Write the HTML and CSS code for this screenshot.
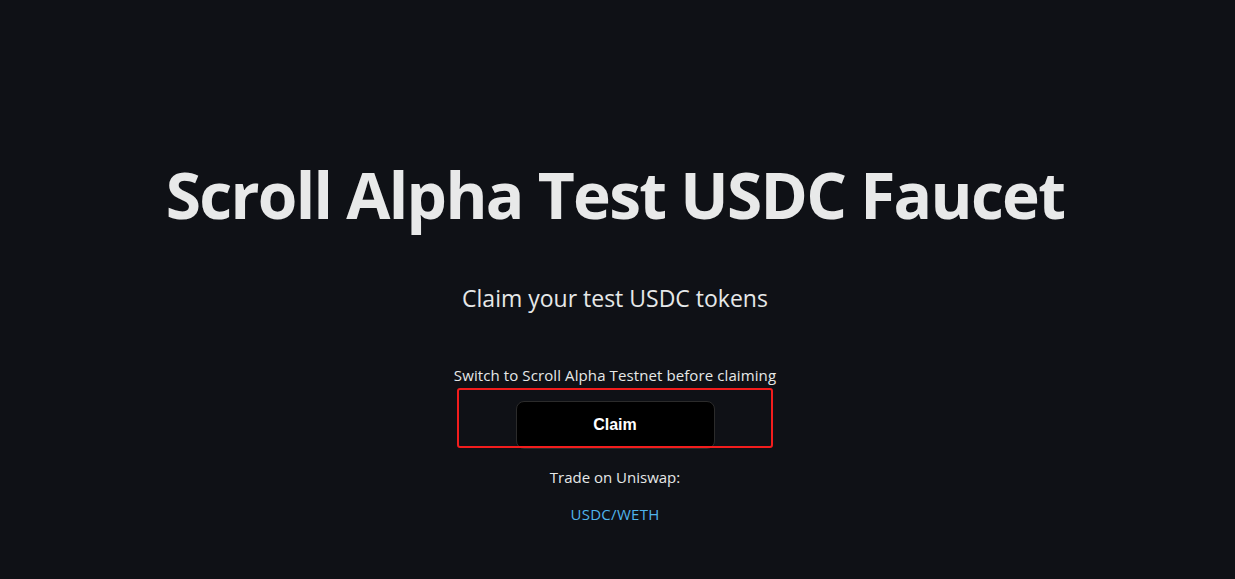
FILE: index.html
```html
<!DOCTYPE html>
<html>
<head>
<meta charset="utf-8">
<link rel="stylesheet" href="styles.css">
</head>
<body>
<main class="page">
  <h1 class="title">Scroll Alpha Test USDC Faucet</h1>
  <p class="subtitle">Claim your test USDC tokens</p>
  <p class="note">Switch to Scroll Alpha Testnet before claiming</p>
  <div class="claim-wrap">
    <button class="claim">Claim</button>
    <div class="highlight"></div>
  </div>
  <p class="trade">Trade on Uniswap:</p>
  <a class="pair" href="#">USDC/WETH</a>
</main>
</body>
</html>
```
FILE: styles.css
```css
html, body {
  margin: 0;
  height: 100%;
  background: #0f1116;
}
body {
  font-family: "Open Sans", "Noto Sans", sans-serif;
  color: #e6e8e8;
}
.page {
  display: flex;
  flex-direction: column;
  align-items: center;
  padding-top: 155px;
  padding-right: 5px;
}
.title {
  margin: 0;
  font-size: 64px;
  line-height: 80px;
  font-weight: 700;
  letter-spacing: -1.7px;
  color: #e8e9e9;
}
.subtitle {
  margin: 48px 0 0;
  font-size: 23px;
  line-height: 31px;
}
.note {
  margin: 51px 0 0;
  font-size: 15px;
  line-height: 20px;
  letter-spacing: 0.1px;
}
.claim-wrap {
  position: relative;
  margin-top: 16px;
}
.claim {
  display: block;
  width: 199px;
  height: 48px;
  background: #000;
  border: 1px solid #2b2b2b;
  border-radius: 8px;
  color: #fff;
  font-family: "Liberation Sans", Arial, sans-serif;
  font-weight: 700;
  font-size: 16px;
}
.highlight {
  position: absolute;
  left: -59px;
  top: -13px;
  width: 316px;
  height: 60px;
  box-sizing: border-box;
  border: 2px solid #f21d1d;
  border-radius: 3px;
}
.trade {
  margin: 18px 0 0;
  font-size: 15px;
  line-height: 20px;
}
.pair {
  margin-top: 17px;
  font-size: 15px;
  line-height: 20px;
  letter-spacing: 0.3px;
  color: #4fb4ec;
  text-decoration: none;
}
```
